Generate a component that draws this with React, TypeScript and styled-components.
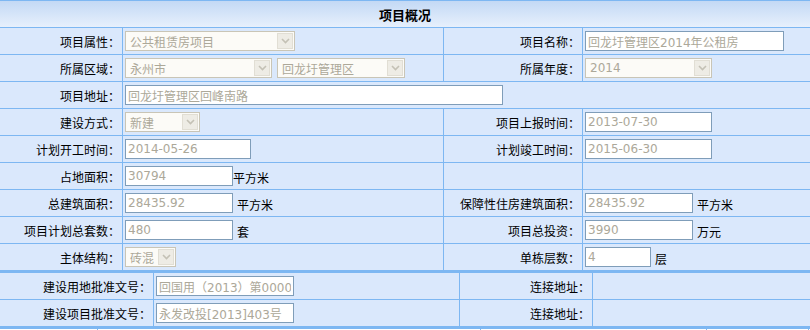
import React from 'react';
import styled, { createGlobalStyle } from 'styled-components';

const LINE = '#7db7f2';
const ROW_BG = '#dae8fc';

const GlobalStyle = createGlobalStyle`
  *, *::before, *::after { box-sizing: border-box; }
  html, body { margin: 0; padding: 0; background: #fff; }
  body {
    font-family: "DejaVu Sans", "Noto Sans CJK SC", sans-serif;
    font-size: 12px;
    color: #000;
    overflow: hidden;
  }
`;

const Page = styled.div`
  width: 810px;
  border-top: 1px solid ${LINE};
`;

const Header = styled.div`
  height: 27px;
  display: flex;
  align-items: center;
  justify-content: center;
  background: linear-gradient(to bottom, #c3d9f5, #e7f0fc);
  border-bottom: 1px solid ${LINE};
  font-family: "Noto Sans CJK SC", sans-serif;
  font-weight: bold;
  font-size: 13px;
`;

// 表格区块
const Section = styled.div<{ $cols: string; $white?: boolean; $thick?: boolean }>`
  display: grid;
  grid-template-columns: ${(p) => p.$cols};
  grid-auto-rows: 27px;
  background: ${(p) => (p.$white ? '#fff' : ROW_BG)};
  border-top: ${(p) => (p.$thick ? `2px solid ${LINE}` : 'none')};
`;

const Label = styled.div`
  display: flex;
  align-items: center;
  justify-content: flex-end;
  padding-right: 2px;
  border-right: 1px solid ${LINE};
  border-bottom: 1px solid ${LINE};
  white-space: nowrap;
  font-family: "Noto Sans CJK SC", sans-serif;
`;

const Value = styled.div<{ $span?: number; $last?: boolean }>`
  grid-column: span ${(p) => p.$span ?? 1};
  display: flex;
  align-items: center;
  padding-left: 2px;
  border-right: ${(p) => (p.$last ? 'none' : `1px solid ${LINE}`)};
  border-bottom: 1px solid ${LINE};
  white-space: nowrap;
  overflow: hidden;
`;

const TextBox = styled.input<{ $w: number }>`
  width: ${(p) => p.$w}px;
  height: 20px;
  border: 1px solid #7f9db9;
  background: #fff;
  color: #aca899;
  font: inherit;
  padding: 0 2px;
  margin: 0;
  outline: none;
`;

const SelectFrame = styled.div<{ $w: number; $gap?: number }>`
  width: ${(p) => p.$w}px;
  height: 20px;
  margin-left: ${(p) => p.$gap ?? 0}px;
  border: 1px solid #c9c5b6;
  background: #fcfbf7;
  display: flex;
  align-items: center;
  padding: 1px;
`;

const SelectText = styled.span`
  flex: 1;
  padding-left: 3px;
  color: #aca899;
  overflow: hidden;
`;

const DropButton = styled.span`
  width: 16px;
  height: 16px;
  background: #eeece5;
  border: 1px solid #e1ded4;
  display: flex;
  align-items: center;
  justify-content: center;
`;

const Unit = styled.span<{ $gap?: number }>`
  margin-left: ${(p) => p.$gap ?? 4}px;
  padding-top: 3px;
  font-family: "Noto Sans CJK SC", sans-serif;
`;

const Select: React.FC<{ w: number; text: string; gap?: number }> = ({ w, text, gap }) => (
  <SelectFrame $w={w} $gap={gap}>
    <SelectText>{text}</SelectText>
    <DropButton>
      <svg width="9" height="6" viewBox="0 0 9 6">
        <path d="M1 1 L4.5 4.5 L8 1" fill="none" stroke="#c4c1b5" strokeWidth="1.6" />
      </svg>
    </DropButton>
  </SelectFrame>
);

const Box: React.FC<{ w: number; text: string }> = ({ w, text }) => (
  <TextBox $w={w} value={text} readOnly />
);

const App: React.FC = () => {
  return (
    <>
      <GlobalStyle />
      <Page>
        <Header>项目概况</Header>
        <Section $cols="123px 321px 139px 1fr">
          <Label>项目属性：</Label>
          <Value><Select w={170} text="公共租赁房项目" /></Value>
          <Label>项目名称：</Label>
          <Value $last><Box w={199} text="回龙圩管理区2014年公租房" /></Value>

          <Label>所属区域：</Label>
          <Value>
            <Select w={147} text="永州市" />
            <Select w={128} text="回龙圩管理区" gap={5} />
          </Value>
          <Label>所属年度：</Label>
          <Value $last><Select w={127} text="2014" /></Value>

          <Label>项目地址：</Label>
          <Value $span={3} $last><Box w={378} text="回龙圩管理区回峰南路" /></Value>

          <Label>建设方式：</Label>
          <Value><Select w={75} text="新建" /></Value>
          <Label>项目上报时间：</Label>
          <Value $last><Box w={127} text="2013-07-30" /></Value>

          <Label>计划开工时间：</Label>
          <Value><Box w={126} text="2014-05-26" /></Value>
          <Label>计划竣工时间：</Label>
          <Value $last><Box w={127} text="2015-06-30" /></Value>

          <Label>占地面积：</Label>
          <Value><Box w={108} text="30794" /><Unit $gap={0}>平方米</Unit></Value>
          <Label />
          <Value $last />

          <Label>总建筑面积：</Label>
          <Value><Box w={108} text="28435.92" /><Unit>平方米</Unit></Value>
          <Label>保障性住房建筑面积：</Label>
          <Value $last><Box w={108} text="28435.92" /><Unit>平方米</Unit></Value>

          <Label>项目计划总套数：</Label>
          <Value><Box w={108} text="480" /><Unit>套</Unit></Value>
          <Label>项目总投资：</Label>
          <Value $last><Box w={108} text="3990" /><Unit>万元</Unit></Value>

          <Label>主体结构：</Label>
          <Value><Select w={51} text="砖混" /></Value>
          <Label>单栋层数：</Label>
          <Value $last><Box w={66} text="4" /><Unit>层</Unit></Value>
        </Section>

        <Section $cols="154px 306px 133px 1fr" $thick>
          <Label>建设用地批准文号：</Label>
          <Value><Box w={138} text="回国用（2013）第00001号" /></Value>
          <Label>连接地址：</Label>
          <Value $last />

          <Label>建设项目批准文号：</Label>
          <Value><Box w={138} text="永发改投[2013]403号" /></Value>
          <Label>连接地址：</Label>
          <Value $last />
        </Section>

        <Section $cols="98px 383px 226px 102px" $thick $white>
          <Value />
          <Value />
          <Value />
          <Value />
        </Section>
      </Page>
    </>
  );
};

export default App;
